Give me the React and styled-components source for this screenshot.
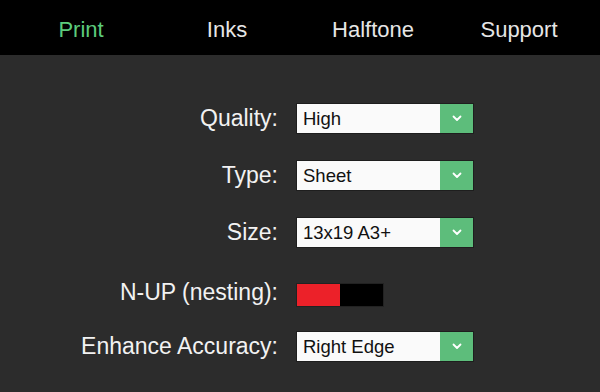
import React from "react";
import styled, { createGlobalStyle } from "styled-components";

const Global = createGlobalStyle`
  html, body { margin: 0; padding: 0; background: #2c2c2c; }
  body { font-family: "Liberation Sans", Arial, sans-serif; }
`;

const Page = styled.div`
  width: 600px;
  height: 392px;
  background: #2c2c2c;
  overflow: hidden;
`;

const Nav = styled.nav`
  height: 55px;
  background: #000;
  display: grid;
  grid-template-columns: repeat(4, 1fr);
  padding: 0 8px;
  box-sizing: border-box;
`;

const NavItem = styled.div`
  display: flex;
  justify-content: center;
  align-items: center;
  padding-top: 4px;
  font-size: 22px;
  color: ${(p) => (p.$active ? "#5ccb7c" : "#e6e6e6")};
`;

const Form = styled.div`
  display: grid;
  grid-template-columns: 278px auto;
  column-gap: 18px;
  grid-auto-rows: 57px;
  padding-top: 35px;
`;

const Label = styled.div`
  display: flex;
  align-items: center;
  justify-content: flex-end;
  padding-top: ${(p) => p.$offset || 0}px;
  font-size: 23px;
  color: #f2f2f2;
`;

const Cell = styled.div`
  display: flex;
  align-items: center;
  padding-top: ${(p) => p.$offset || 0}px;
`;

const Select = styled.div`
  width: 178px;
  height: 31px;
  display: flex;
  box-sizing: border-box;
  border: 1px solid #1e1e1e;
`;

const Value = styled.div`
  flex: 1;
  background: #fafafa;
  color: #111;
  font-size: 18.5px;
  display: flex;
  align-items: center;
  padding-left: 6px;
`;

const Arrow = styled.div`
  width: 33px;
  background: #5dbd7b;
  display: flex;
  align-items: center;
  justify-content: center;
`;

const Toggle = styled.div`
  width: 88px;
  height: 24px;
  display: flex;
  box-sizing: border-box;
  border: 1px solid #222;
`;

const Half = styled.div`
  flex: 1;
  background: ${(p) => p.$color};
`;

const Chevron = () => (
  <svg width="10" height="7" viewBox="0 0 10 7">
    <path d="M1.5 1.5 L5 5 L8.5 1.5" fill="none" stroke="#fff" strokeWidth="1.8" strokeLinecap="round" strokeLinejoin="round" />
  </svg>
);

const Dropdown = ({ value }) => (
  <Select>
    <Value>{value}</Value>
    <Arrow>
      <Chevron />
    </Arrow>
  </Select>
);

export default function App() {
  return (
    <Page>
      <Global />
      <Nav>
        <NavItem $active>Print</NavItem>
        <NavItem>Inks</NavItem>
        <NavItem>Halftone</NavItem>
        <NavItem>Support</NavItem>
      </Nav>
      <Form>
        <Label>Quality:</Label>
        <Cell><Dropdown value="High" /></Cell>
        <Label>Type:</Label>
        <Cell><Dropdown value="Sheet" /></Cell>
        <Label>Size:</Label>
        <Cell><Dropdown value="13x19 A3+" /></Cell>
        <Label $offset={5}>N-UP (nesting):</Label>
        <Cell $offset={11}>
          <Toggle>
            <Half $color="#ec2129" />
            <Half $color="#000" />
          </Toggle>
        </Cell>
        <Label>Enhance Accuracy:</Label>
        <Cell><Dropdown value="Right Edge" /></Cell>
      </Form>
    </Page>
  );
}
